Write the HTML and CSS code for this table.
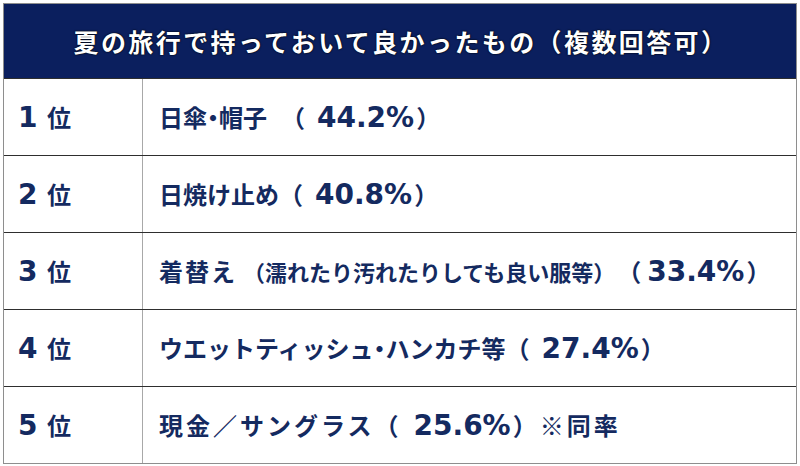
FILE: index.html
```html
<!DOCTYPE html>
<html lang="ja">
<head>
<meta charset="utf-8">
<title>夏の旅行で持っておいて良かったもの</title>
<link rel="stylesheet" href="styles.css">
</head>
<body>
<div class="table">
  <div class="head">夏の旅行で持っておいて良かったもの（複数回答可）</div>
  <div class="row">
    <div class="rank"><span><span class="num">1</span> 位</span></div>
    <div class="item"><span>日傘<span class="dot">・</span>帽子<span class="gap">（</span><span class="num pct">44.2%</span>）</span></div>
  </div>
  <div class="row">
    <div class="rank"><span><span class="num">2</span> 位</span></div>
    <div class="item"><span>日焼け止め（<span class="num pct">40.8%</span>）</span></div>
  </div>
  <div class="row">
    <div class="rank"><span><span class="num">3</span> 位</span></div>
    <div class="item"><span><span class="wide">着替え</span><span class="small">（濡れたり汚れたりしても良い服等）</span>（<span class="num pct tight">33.4%</span>）</span></div>
  </div>
  <div class="row">
    <div class="rank"><span><span class="num">4</span> 位</span></div>
    <div class="item"><span>ウエットティッシュ<span class="dot">・</span>ハンカチ等（<span class="num pct">27.4%</span>）</span></div>
  </div>
  <div class="row">
    <div class="rank"><span><span class="num">5</span> 位</span></div>
    <div class="item spaced"><span>現金／サングラス（<span class="num pct">25.6%</span>）※同率</span></div>
  </div>
</div>
</body>
</html>
```

FILE: styles.css
```css
html, body {
  margin: 0;
  padding: 0;
  background: #ffffff;
}
body {
  padding: 3px;
  font-family: "Noto Sans CJK JP", "Noto Sans", sans-serif;
  font-weight: 700;
}
.table {
  width: 792px;
  border: 1px solid #8e8e8e;
  display: flex;
  flex-direction: column;
}
.head {
  height: 74px;
  padding-left: 2px;
  background: #0b1f5e;
  color: #ffffff;
  font-size: 25px;
  letter-spacing: 2.4px;
  display: flex;
  align-items: center;
  justify-content: center;
  text-shadow: 0 0 2px #000, 0 0 1px #000;
}
.row {
  height: 76px;
  border-top: 1px solid #2e2e2e;
  display: flex;
  color: #142a60;
  font-size: 24px;
}
.row:first-of-type {
  border-top-color: #555;
}
.rank {
  width: 139px;
  border-right: 1px solid #a8a8a8;
  padding-left: 14px;
  box-sizing: border-box;
  display: flex;
  align-items: center;
  white-space: nowrap;
  padding-bottom: 2px;
}
.rank .num {
  margin-right: 4px;
}
.item {
  flex: 1;
  padding-left: 16px;
  display: flex;
  align-items: center;
  white-space: nowrap;
  padding-bottom: 2px;
}
.num {
  font-family: "DejaVu Sans", "Noto Sans", sans-serif;
  font-size: 28px;
}
.pct {
  margin: 0 2px 0 12px;
}
.pct.tight {
  margin-left: 6px;
}
.dot {
  font-feature-settings: "palt";
}
.gap {
  margin-left: 14px;
}
.wide {
  letter-spacing: 2px;
}
.small {
  font-size: 22px;
  margin: 0 14px 0 6px;
}
.spaced {
  letter-spacing: 3px;
}
.spaced .num {
  letter-spacing: 0;
}
```
